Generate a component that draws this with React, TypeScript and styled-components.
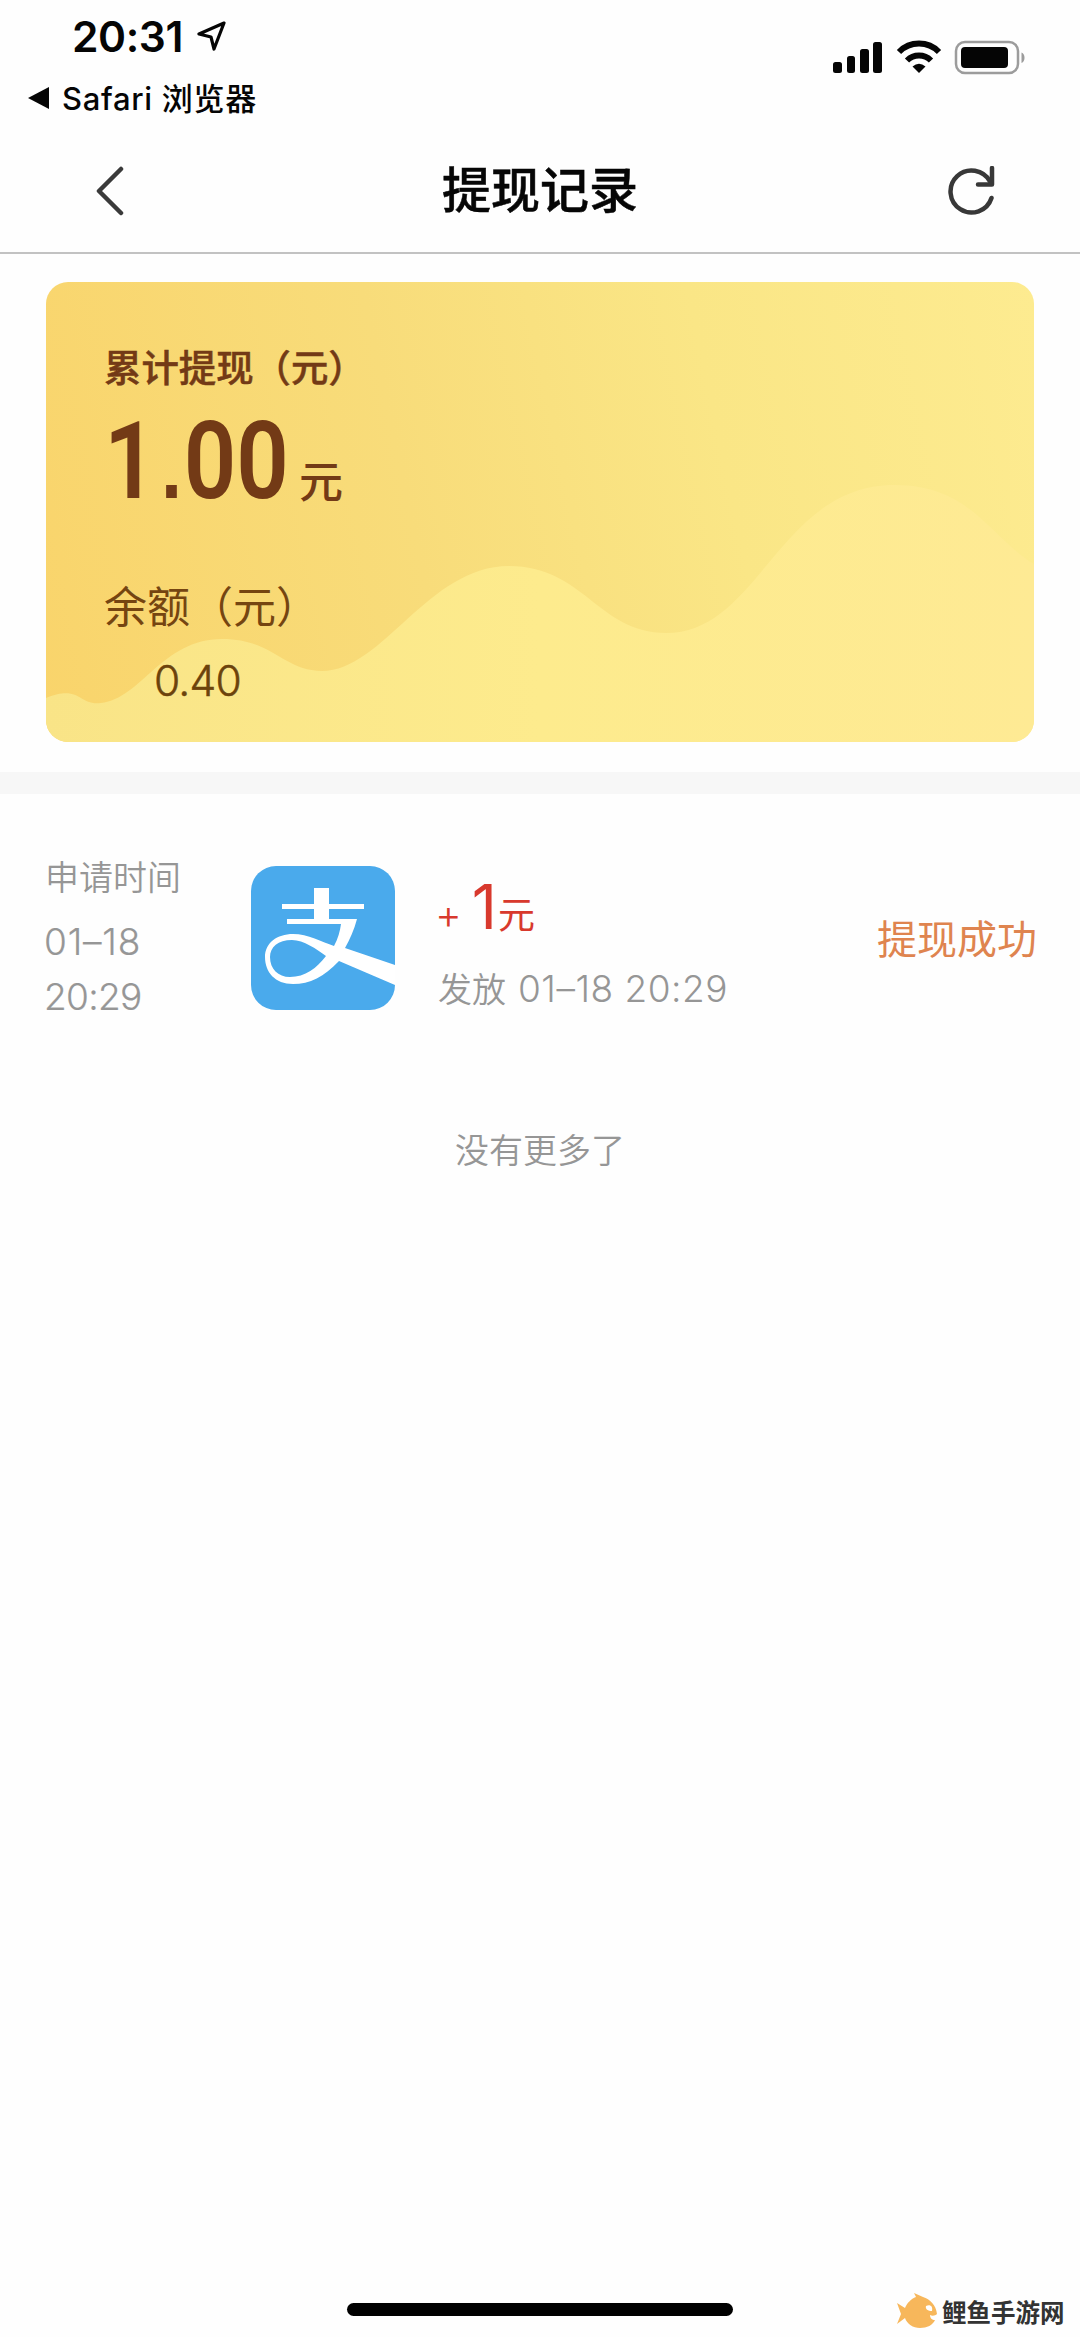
import React from 'react';
import styled, { createGlobalStyle } from 'styled-components';

const Global = createGlobalStyle`
  * { box-sizing: border-box; }
  body { margin: 0; background: #fefefe; }
`;

const Screen = styled.div`
  width: 1080px;
  height: 2337px;
  display: flex;
  flex-direction: column;
  background: #fefefe;
  overflow: hidden;
  font-family: Inter, 'Noto Sans CJK SC', sans-serif;
`;

const StatusBar = styled.header`
  height: 124px;
  flex: none;
  display: flex;
  justify-content: space-between;
  color: #050505;
`;

const StatusLeft = styled.div`
  padding: 11px 0 0 28px;
  display: flex;
  flex-direction: column;
`;

const Clock = styled.div`
  display: flex;
  align-items: center;
  gap: 14px;
  height: 50px;
  padding-left: 44px;
  font-size: 42.5px;
  font-weight: 600;
  letter-spacing: -0.4px;
`;

const BackToApp = styled.div`
  display: flex;
  align-items: center;
  height: 44px;
  margin-top: 13px;
  gap: 13px;
  font-size: 31px;
  font-weight: 500;
  letter-spacing: 0.7px;
  white-space: nowrap;
`;

const BackArrow = styled.svg`
  margin-top: 3px;
`;

const StatusIcons = styled.div`
  display: flex;
  align-items: flex-start;
  padding: 40px 53px 0 0;
`;

const NavBar = styled.nav`
  height: 130px;
  flex: none;
  display: flex;
  align-items: center;
  justify-content: space-between;
  padding: 6px 83px 0 93px;
  border-bottom: 2px solid #c2c2c2;
`;

const Title = styled.h1`
  margin: 0 0 1px;
  font-size: 49px;
  font-weight: 500;
  line-height: 60px;
  color: #060606;
  -webkit-text-stroke: 0.5px currentColor;
`;

const Summary = styled.section`
  padding: 28px 46px 30px;
  flex: none;
`;

const Card = styled.div`
  position: relative;
  height: 460px;
  border-radius: 22px;
  overflow: hidden;
  background: linear-gradient(78deg, #f9d46b 0%, #f8dc7a 38%, #fae686 68%, #fdeb90 100%);
  color: #733a16;
`;

const Wave = styled.svg`
  position: absolute;
  inset: 0;
`;

const CardBody = styled.div`
  position: relative;
  display: flex;
  flex-direction: column;
  padding: 60px 57px 0 58px;
`;

const TotalLabel = styled.div`
  height: 48px;
  line-height: 48px;
  font-size: 37.4px;
  font-weight: 500;
  font-family: 'Noto Sans CJK SC', sans-serif;
  -webkit-text-stroke: 0.5px currentColor;
`;

const Total = styled.div`
  display: flex;
  align-items: baseline;
  height: 100px;
  line-height: 100px;
  margin-top: 22px;
`;

const TotalDigits = styled.span`
  width: 195px;
  font-family: Roboto, sans-serif;
  font-size: 107px;
  font-weight: 600;
  transform: scaleX(0.86);
  transform-origin: left;
`;

const Point = styled.span`
  font-family: 'Liberation Sans', sans-serif;
  font-size: 88px;
  font-weight: 700;
  line-height: 1;
  margin: 0 2px 0 5px;
`;

const TotalUnit = styled.span`
  font-size: 44px;
  font-weight: 500;
`;

const BalanceLabel = styled.div`
  margin-top: 67px;
  height: 56px;
  line-height: 56px;
  font-size: 43px;
  color: #754511;
`;

const Balance = styled.div`
  margin-top: 18px;
  padding-left: 50px;
  height: 56px;
  line-height: 56px;
  font-size: 42.5px;
  font-weight: 300;
  letter-spacing: -0.8px;
  color: #6c430c;
  -webkit-text-stroke: 0.5px currentColor;
`;

const Divider = styled.div`
  height: 22px;
  flex: none;
  background: #f7f7f7;
`;

const Row = styled.section`
  display: flex;
  align-items: flex-start;
  padding: 56px 43px 0 44px;
  height: 332px;
  flex: none;
  color: #969696;
`;

const Applied = styled.div`
  width: 206px;
`;

const AppliedLabel = styled.div`
  font-size: 34px;
  line-height: 55px;
  font-weight: 350;
  padding-left: 1px;
  margin-bottom: 10px;
`;

const AppliedLine = styled.div<{ $tracking: number }>`
  font-size: 37px;
  line-height: 54.5px;
  font-weight: 300;
  letter-spacing: ${p => p.$tracking}px;
  -webkit-text-stroke: 0.2px currentColor;
`;

const AlipayLogo = styled.svg`
  flex: none;
  margin-top: 15px;
`;

const Detail = styled.div`
  flex: 1;
  padding: 17px 0 0 42px;
`;

const Amount = styled.div`
  display: flex;
  align-items: baseline;
  height: 80px;
  line-height: 80px;
  color: #d8392d;
`;

const Part = styled.span<{ $size: number; $weight?: number; $gap?: number; $tracking?: number }>`
  font-size: ${p => p.$size}px;
  font-weight: ${p => p.$weight ?? 400};
  margin-left: ${p => p.$gap ?? 0}px;
  letter-spacing: ${p => p.$tracking ?? 0}px;
`;

const Paid = styled.div`
  display: flex;
  align-items: baseline;
  height: 50px;
  line-height: 50px;
  margin-top: 17px;
  white-space: nowrap;
`;

const Status = styled.div`
  padding-top: 60px;
  line-height: 60px;
  font-size: 40px;
  color: #df844f;
`;

const NoMore = styled.p`
  margin: 0;
  flex: none;
  text-align: center;
  font-size: 34px;
  line-height: 50px;
  font-weight: 350;
  color: #969696;
`;

const Footer = styled.footer`
  margin-top: auto;
  height: 67px;
  flex: none;
  display: flex;
  align-items: flex-start;
  padding-left: 347px;
`;

const HomeBar = styled.div`
  width: 386px;
  height: 13px;
  margin-top: 33px;
  border-radius: 7px;
  background: #000;
`;

const Brand = styled.div`
  display: flex;
  align-items: center;
  margin: 19px 0 0 164px;
  height: 44px;
  gap: 5px;
  font-family: 'Noto Sans CJK SC', sans-serif;
  font-size: 24.5px;
  font-weight: 700;
  color: #333;
  white-space: nowrap;
`;

export default function App() {
  return (
    <Screen>
      <Global />
      <StatusBar>
        <StatusLeft>
          <Clock>
            20:31
            <svg width="30" height="30" viewBox="0 0 30 30" fill="none" stroke="#050505" strokeWidth="3.2" strokeLinejoin="round">
              <path d="M27 2 2 13l12 3 3 12Z" />
            </svg>
          </Clock>
          <BackToApp>
            <BackArrow width="21" height="22" viewBox="0 0 21 22"><path d="M0 11 21 0v22Z" fill="#050505" /></BackArrow>
            Safari 浏览器
          </BackToApp>
        </StatusLeft>
        <StatusIcons>
          <svg width="194" height="36" viewBox="0 0 194 36">
            <g fill="#050505">
              <rect x="0" y="22" width="9" height="11" rx="2.5" />
              <rect x="14" y="16" width="8" height="17" rx="2.5" />
              <rect x="27" y="9" width="9" height="24" rx="2.5" />
              <rect x="40" y="2" width="9" height="31" rx="2.5" />
            </g>
            <g fill="none" stroke="#050505" strokeWidth="6">
              <path d="M66 12a28 28 0 0 1 40 0" />
              <path d="M74 20.500a17 17 0 0 1 24 0" />
            </g>
            <path d="M79.500 26.500q6.500-5.500 13 0L86 33Z" fill="#050505" />
            <rect x="123" y="2" width="62" height="31" rx="9" fill="none" stroke="#9c9c9c" strokeWidth="2.500" />
            <rect x="128" y="7" width="47" height="21" rx="4" fill="#050505" />
            <path d="M188.500 12.500c4 1.500 4 9 0 10.500Z" fill="#9c9c9c" />
          </svg>
        </StatusIcons>
      </StatusBar>

      <NavBar>
        <svg width="40" height="50" viewBox="0 0 40 50" fill="none" stroke="#3a3a3a" strokeWidth="4.500" strokeLinecap="round" strokeLinejoin="round">
          <path d="M28 3 6 25l22 22" />
        </svg>
        <Title>提现记录</Title>
        <svg width="50" height="50" viewBox="0 0 50 50" fill="none" stroke="#383838" strokeWidth="4.500" strokeLinecap="round" strokeLinejoin="round">
          <path d="M44.500 32A21 21 0 1 1 43 15.500" />
          <path d="M45 2v16.500H31" />
        </svg>
      </NavBar>

      <Summary>
        <Card>
          <Wave width="988" height="460" viewBox="0 0 988 460">
            <defs>
              <linearGradient id="wave" x1="0" x2="1">
                <stop offset="0" stopColor="#f9e487" />
                <stop offset="0.5" stopColor="#fdeb8d" />
                <stop offset="1" stopColor="#feea94" />
              </linearGradient>
            </defs>
            <path
              d="M0 416C35 402 32 424 55 421C95 417 116 357 176 357C227 357 237 389 276 389C337 389 382 284 463 284C538 284 552 351 620 351C714 351 732 203 849 203C926 203 946 258 988 282V460H0Z"
              fill="url(#wave)"
            />
          </Wave>
          <CardBody>
            <TotalLabel>累计提现（元）</TotalLabel>
            <Total>
              <TotalDigits>1<Point>.</Point>00</TotalDigits>
              <TotalUnit>元</TotalUnit>
            </Total>
            <BalanceLabel>余额（元）</BalanceLabel>
            <Balance>0.40</Balance>
          </CardBody>
        </Card>
      </Summary>

      <Divider />

      <Row>
        <Applied>
          <AppliedLabel>申请时间</AppliedLabel>
          <AppliedLine $tracking={0.8}>01–18</AppliedLine>
          <AppliedLine $tracking={-0.7}>20:29</AppliedLine>
        </Applied>
        <AlipayLogo width="146" height="146" viewBox="0 0 146 146">
          <rect x="1" y="1" width="144" height="144" rx="25" fill="#4aaaec" />
          <g fill="#fff">
            <path d="M64 23h15v32H64Z" />
            <path d="M32 39h82v5H32Z" />
            <path d="M37 54h70C104 65 100 74 95 83L145 100V120L89 96C74 112 60 119 43 119 25 119 15 107 15 92 15 78 27 69 43 69 58 69 72 77 84 81 88 74 90 66 91 59H37Z" />
          </g>
          <path d="M76 91C66 84 54 75 42 75 28 75 20 82 20 92 20 104 28 112 40 112 55 112 67 103 76 91Z" fill="#4aaaec" />
        </AlipayLogo>
        <Detail>
          <Amount>
            <Part $size={41} $weight={300} $gap={-3}>+</Part>
            <Part $size={62} $gap={10}>1</Part>
            <Part $size={37} $gap={1}>元</Part>
          </Amount>
          <Paid>
            <Part $size={34} $weight={350}>发放</Part>
            <Part $size={37} $weight={300} $gap={12} $tracking={0.5}>01–18 20:29</Part>
          </Paid>
        </Detail>
        <Status>提现成功</Status>
      </Row>

      <NoMore>没有更多了</NoMore>

      <Footer>
        <HomeBar />
        <Brand>
          <svg width="40" height="36" viewBox="0 0 40 36">
            <path d="M0 10 8 15C10 10 14 6 19 4L17 0 26 4C33 6 39 12 40 21 38 23 35 23 33 22 33 25 35 27 38 27 36 32 30 35 23 35 16 35 10 31 8 25L0 31 4 21Z" fill="#f7b75b" />
            <path d="M29 13c4-2 7 0 6 5-4 0-7-2-6-5Z" fill="#fff" />
          </svg>
          鲤鱼手游网
        </Brand>
      </Footer>
    </Screen>
  );
}
